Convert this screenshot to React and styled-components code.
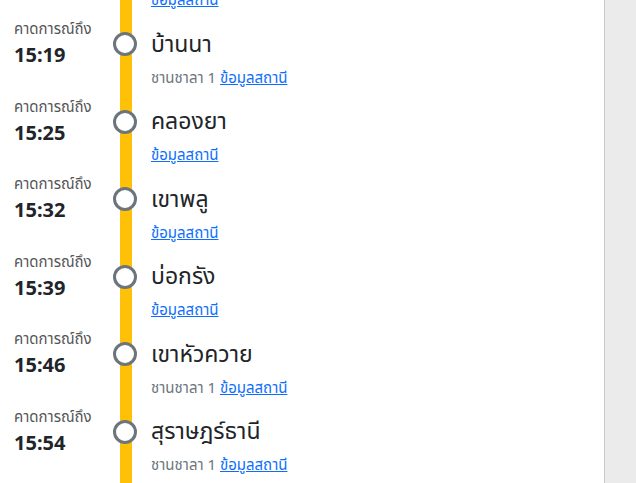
import React from "react";
import styled, { createGlobalStyle } from "styled-components";

const GlobalStyle = createGlobalStyle`
	html, body {
		margin: 0;
		padding: 0;
		height: 483px;
		overflow: hidden;
		background: #ebebeb;
		font-family: "Noto Sans", "Noto Sans Thai", sans-serif;
	}
`;

const stops = [
	{ time: "15:12", name: "ทุ่งสง", platform: null },
	{ time: "15:19", name: "บ้านนา", platform: "1" },
	{ time: "15:25", name: "คลองยา", platform: null },
	{ time: "15:32", name: "เขาพลู", platform: null },
	{ time: "15:39", name: "บ่อกรัง", platform: null },
	{ time: "15:46", name: "เขาหัวควาย", platform: "1" },
	{ time: "15:54", name: "สุราษฎร์ธานี", platform: "1" },
	{ time: "16:03", name: "คลองไทร", platform: null },
];

const Panel = styled.main`
	width: 605px;
	height: 483px;
	box-sizing: border-box;
	background: #fff;
	border-right: 1px solid #c9c9c9;
	overflow: hidden;
`;

const Timeline = styled.ol`
	list-style: none;
	margin: -63.6px 0 0;
	padding: 0;
`;

const Row = styled.li`
	display: grid;
	grid-template-columns: 113px 24px 1fr;
	height: 77.6px;
`;

const TimeCol = styled.div`
	padding: 4px 0 0 14px;
`;

const Expect = styled.div`
	font-size: 15px;
	line-height: 20px;
	color: #555;
	white-space: nowrap;
`;

const Clock = styled.div`
	margin-top: 2px;
	font-size: 20px;
	line-height: 30px;
	font-weight: 700;
	color: #212529;
`;

const Track = styled.div`
	position: relative;
	display: flex;
	justify-content: center;
	&::before {
		content: "";
		position: absolute;
		top: 0;
		bottom: 0;
		left: 7px;
		width: 12px;
		background: #ffc107;
	}
`;

const Dot = styled.span`
	position: relative;
	margin-top: 18px;
	width: 24px;
	height: 24px;
	box-sizing: border-box;
	border: 3px solid #6c757d;
	border-radius: 50%;
	background: #fff;
`;

const Info = styled.div`
	padding: 14.5px 0 0 14px;
`;

const Name = styled.div`
	font-size: 23px;
	line-height: 28px;
	color: #212529;
`;

const Sub = styled.div`
	margin-top: 10px;
	font-size: 15px;
	line-height: 21px;
	color: #6c757d;
`;

const InfoLink = styled.a`
	color: #0d6efd;
	text-decoration: underline;
`;

export default function App() {
	return (
		<>
			<GlobalStyle />
			<Panel>
				<Timeline>
					{stops.map((s) => (
						<Row key={s.name}>
							<TimeCol>
								<Expect>คาดการณ์ถึง</Expect>
								<Clock>{s.time}</Clock>
							</TimeCol>
							<Track>
								<Dot />
							</Track>
							<Info>
								<Name>{s.name}</Name>
								<Sub>
									{s.platform && <>ชานชาลา {s.platform} </>}
									<InfoLink href="#">ข้อมูลสถานี</InfoLink>
								</Sub>
							</Info>
						</Row>
					))}
				</Timeline>
			</Panel>
		</>
	);
}
